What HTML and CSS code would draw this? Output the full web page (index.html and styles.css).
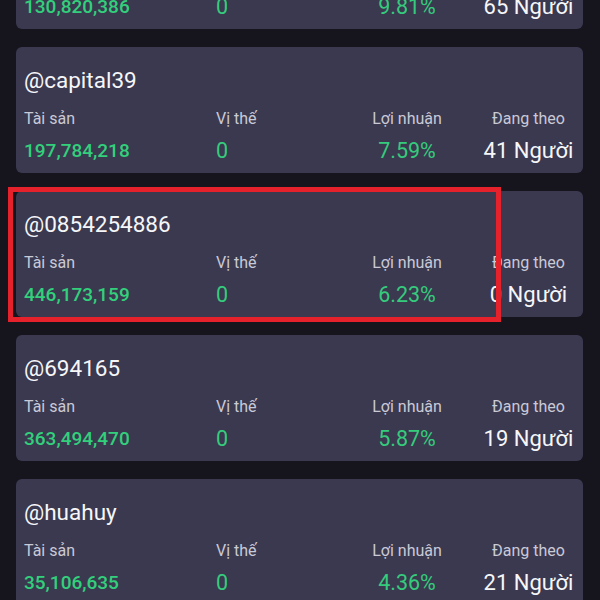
FILE: index.html
```html
<!DOCTYPE html>
<html lang="vi">
<head>
    <meta charset="UTF-8">
    <meta name="viewport" content="width=device-width, initial-scale=1.0">
    <title>Bảng xếp hạng</title>
    <link rel="stylesheet" href="styles.css">
</head>
<body>
<div class="trader-list">
    <div class="trader-card">
        <div class="trader-name">@mrtuan88</div>
        <div class="trader-stats">
            <span class="label">Tài sản</span>
            <span class="label">Vị thế</span>
            <span class="label center">Lợi nhuận</span>
            <span class="label center last">Đang theo</span>
            <span class="asset">130,820,386</span>
            <span class="value">0</span>
            <span class="value center">9.81%</span>
            <span class="follow center last">65 Người</span>
        </div>
    </div>

    <div class="trader-card">
        <div class="trader-name">@capital39</div>
        <div class="trader-stats">
            <span class="label">Tài sản</span>
            <span class="label">Vị thế</span>
            <span class="label center">Lợi nhuận</span>
            <span class="label center last">Đang theo</span>
            <span class="asset">197,784,218</span>
            <span class="value">0</span>
            <span class="value center">7.59%</span>
            <span class="follow center last">41 Người</span>
        </div>
    </div>

    <div class="trader-card">
        <div class="trader-name">@0854254886</div>
        <div class="trader-stats">
            <span class="label">Tài sản</span>
            <span class="label">Vị thế</span>
            <span class="label center">Lợi nhuận</span>
            <span class="label center last">Đang theo</span>
            <span class="asset">446,173,159</span>
            <span class="value">0</span>
            <span class="value center">6.23%</span>
            <span class="follow center last">0 Người</span>
        </div>
        <!-- khung đánh dấu -->
        <div class="highlight"></div>
    </div>

    <div class="trader-card">
        <div class="trader-name">@694165</div>
        <div class="trader-stats">
            <span class="label">Tài sản</span>
            <span class="label">Vị thế</span>
            <span class="label center">Lợi nhuận</span>
            <span class="label center last">Đang theo</span>
            <span class="asset">363,494,470</span>
            <span class="value">0</span>
            <span class="value center">5.87%</span>
            <span class="follow center last">19 Người</span>
        </div>
    </div>

    <div class="trader-card">
        <div class="trader-name">@huahuy</div>
        <div class="trader-stats">
            <span class="label">Tài sản</span>
            <span class="label">Vị thế</span>
            <span class="label center">Lợi nhuận</span>
            <span class="label center last">Đang theo</span>
            <span class="asset">35,106,635</span>
            <span class="value">0</span>
            <span class="value center">4.36%</span>
            <span class="follow center last">21 Người</span>
        </div>
    </div>
</div>
</body>
</html>
```

FILE: styles.css
```css
/* Nền tối */
body {
    font-family: Roboto, "Noto Sans", sans-serif;
    background-color: #16151d;
    margin: 0;
    padding: 0;
    height: 600px;
    overflow: hidden;
}

.trader-list {
    display: flex;
    flex-direction: column;
    gap: 18px;
    padding: 0 17px 0 16px;
    margin-top: -97px;
}

.trader-card {
    position: relative;
    background-color: #3a3950;
    border-radius: 6px;
    padding: 19px 0 0 8px;
    height: 126px;
    box-sizing: border-box;
}

.trader-name {
    font-size: 22.5px;
    line-height: 28px;
    color: #f6f6f8;
}

.trader-stats {
    display: grid;
    grid-template-columns: 192px 136px 110px 1fr;
    margin-top: 15px;
    row-gap: 9px;
}

.label {
    font-size: 16px;
    line-height: 20px;
    color: #cac9d6;
}

.asset {
    font-size: 19px;
    font-weight: 500;
    line-height: 26px;
    color: #33d07c;
}

.value {
    font-size: 21.5px;
    line-height: 26px;
    color: #36cb7c;
}

.follow {
    font-size: 22px;
    line-height: 26px;
    color: #f6f6f8;
}

.center {
    text-align: center;
}

.last {
    padding-left: 12px;
}

/* Khung đỏ đánh dấu */
.highlight {
    position: absolute;
    left: -8px;
    top: -4px;
    width: 493px;
    height: 135px;
    border: 5px solid #e5222c;
    box-sizing: border-box;
}
```
